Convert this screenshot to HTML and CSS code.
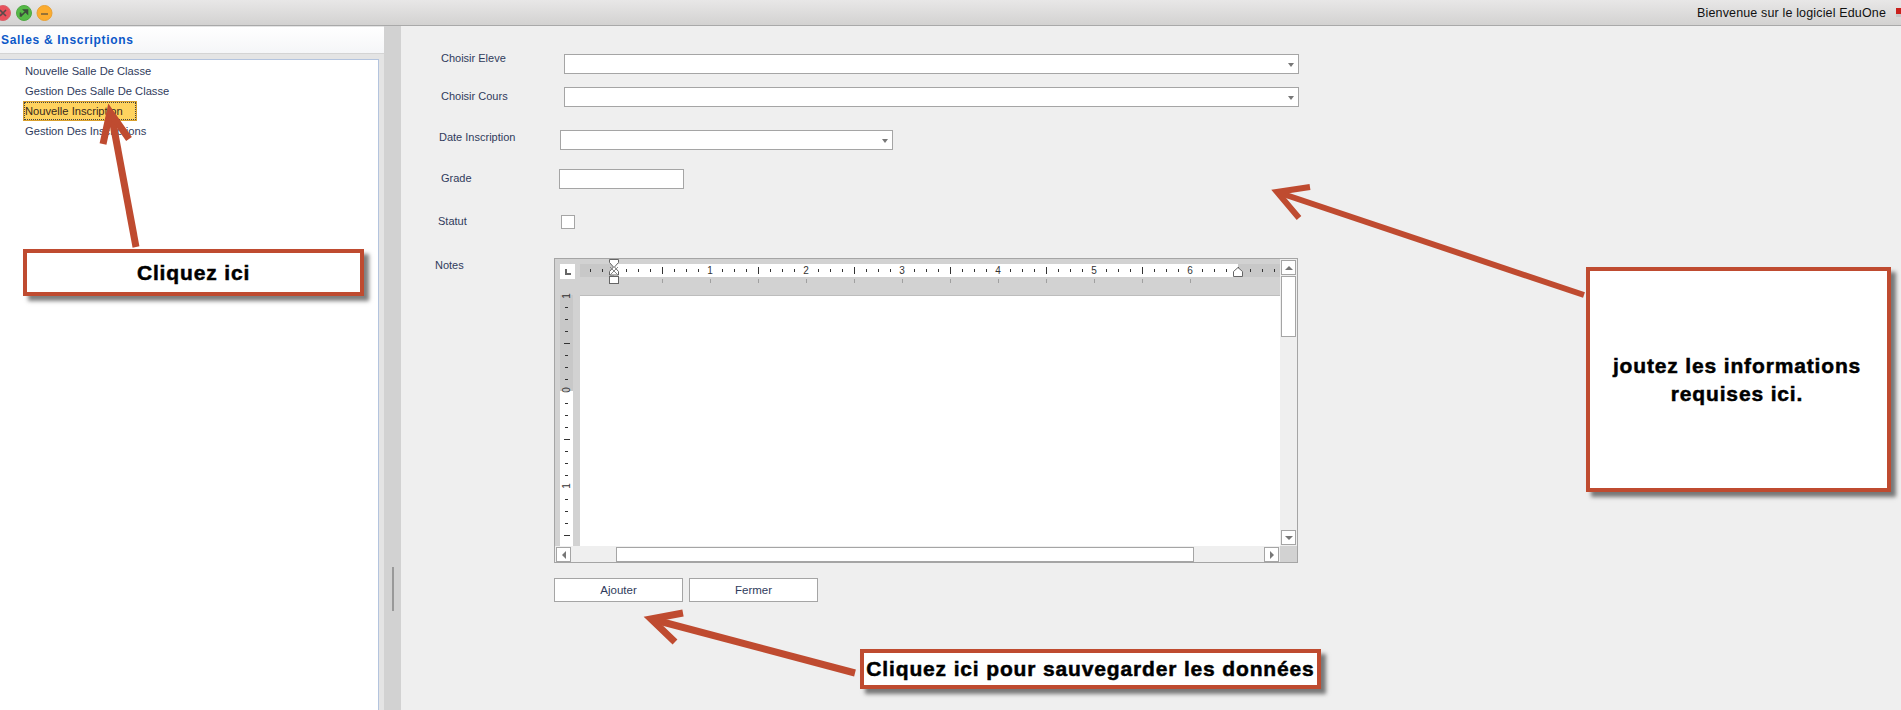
FILE: index.html
```html
<!DOCTYPE html>
<html>
<head>
	<meta charset="utf-8">
	<title>Salles &amp; Inscriptions</title>
	<link rel="stylesheet" href="styles.css">
</head>
<body>
	<div class="titlebar">
		<svg class="lights" width="56" height="22" viewBox="0 0 56 22">
			<circle cx="3" cy="11" r="7.5" fill="#e8515c" stroke="#d8636b"/>
			<path d="M0 8l6 6M6 8l-6 6" stroke="#5a4a4a" stroke-width="1.6"/>
			<circle cx="24" cy="11" r="7.5" fill="#56b947" stroke="#4fa844"/>
			<path d="M21 14l6-6M24 8h3.5v3.5zM21 14h-0.500v-3.500z" stroke="#3c4a3c" stroke-width="1.600" fill="#3c4a3c"/>
			<circle cx="44.500" cy="11" r="7.500" fill="#fcac2e" stroke="#e8a033"/>
			<path d="M41 12h7" stroke="#6a5a3a" stroke-width="1.400"/>
		</svg>
		<span class="welcome">Bienvenue sur le logiciel EduOne</span>
		<span class="tray"></span>
	</div>

	<div class="main">
		<div class="sidebar">
			<div class="side-head">Salles &amp; Inscriptions</div>
			<ul class="menu">
				<li>Nouvelle Salle De Classe</li>
				<li>Gestion Des Salle De Classe</li>
				<li class="selected"><span>Nouvelle Inscription</span></li>
				<li>Gestion Des Inscriptions</li>
			</ul>
		</div>

		<div class="splitter"><span class="grip"></span></div>

		<div class="content">
			<div class="row row-eleve">
				<label>Choisir Eleve</label>
				<div class="field combo wide"></div>
			</div>
			<div class="row row-cours">
				<label>Choisir Cours</label>
				<div class="field combo wide"></div>
			</div>
			<div class="row row-date">
				<label>Date Inscription</label>
				<div class="field combo date"></div>
			</div>
			<div class="row row-grade">
				<label>Grade</label>
				<div class="field grade"></div>
			</div>
			<div class="row row-statut">
				<label>Statut</label>
				<div class="check"></div>
			</div>
			<div class="row row-notes">
				<label>Notes</label>
				<div class="editor">
					<svg class="hruler" width="725" height="36" viewBox="0 0 725 36">
						<defs>
							<pattern id="hticks" width="96" height="36" patternUnits="userSpaceOnUse" patternTransform="translate(59 0)">
								<rect x="12" y="10" width="1" height="3" fill="#333"/>
								<rect x="24" y="10" width="1" height="3" fill="#333"/>
								<rect x="36" y="10" width="1" height="3" fill="#333"/>
								<rect x="48" y="8" width="1" height="7" fill="#333"/>
								<rect x="60" y="10" width="1" height="3" fill="#333"/>
								<rect x="72" y="10" width="1" height="3" fill="#333"/>
								<rect x="84" y="10" width="1" height="3" fill="#333"/>
							</pattern>
							<pattern id="htabs" width="48" height="36" patternUnits="userSpaceOnUse" patternTransform="translate(59 0)">
								<rect x="0" y="20" width="1" height="4" fill="#a0a0a0"/>
							</pattern>
						</defs>
						<rect x="5" y="5" width="15" height="15" fill="#fff"/>
						<path d="M10 10v6h6v-2h-4v-4z" fill="#666"/>
						<rect x="25" y="5" width="700" height="13" fill="#c8c8c8"/>
						<rect x="59" y="5" width="624" height="13" fill="#fff"/>
						<rect x="27" y="0" width="696" height="18" fill="url(#hticks)"/>
						<rect x="100" y="18" width="540" height="8" fill="url(#htabs)"/>
						<g class="ruler-num">
							<text x="155" y="15">1</text>
							<text x="251" y="15">2</text>
							<text x="347" y="15">3</text>
							<text x="443" y="15">4</text>
							<text x="539" y="15">5</text>
							<text x="635" y="15">6</text>
						</g>
						<path d="M54.500 0.500h9v3l-4 4.500 4 4.500v3.500h-9v-3.500l4-4.500-4-4.500z" fill="#fff" stroke="#666"/>
						<path d="M55 8l8 8M63 8l-8 8" stroke="#888"/>
						<rect x="54.500" y="17.500" width="9" height="7" fill="#fff" stroke="#666"/>
						<path d="M678.500 17.500v-5l4.500-4 4.500 4v5z" fill="#fff" stroke="#666"/>
					</svg>
					<div class="vscroll">
						<div class="sb-top">
							<div class="sb-btn"><i class="tri up"></i></div>
							<div class="sb-thumb-v"></div>
						</div>
						<div class="sb-btn"><i class="tri down"></i></div>
					</div>
					<svg class="vruler" width="25" height="251" viewBox="0 0 25 251">
						<defs>
							<pattern id="vticks" width="25" height="96" patternUnits="userSpaceOnUse" patternTransform="translate(0 0)">
								<rect x="10" y="12" width="3" height="1" fill="#333"/>
								<rect x="10" y="24" width="3" height="1" fill="#333"/>
								<rect x="10" y="36" width="3" height="1" fill="#333"/>
								<rect x="9" y="48" width="6" height="1" fill="#333"/>
								<rect x="10" y="60" width="3" height="1" fill="#333"/>
								<rect x="10" y="72" width="3" height="1" fill="#333"/>
								<rect x="10" y="84" width="3" height="1" fill="#333"/>
							</pattern>
						</defs>
						<rect x="5" y="0" width="13" height="96" fill="#c8c8c8"/>
						<rect x="5" y="96" width="13" height="155" fill="#fff"/>
						<rect x="5" y="0" width="13" height="251" fill="url(#vticks)"/>
						<g class="ruler-num">
							<text transform="translate(15 95) rotate(-90)">0</text>
							<text transform="translate(15 191) rotate(-90)">1</text>
							<text transform="translate(15 1) rotate(-90)">1</text>
						</g>
					</svg>
					<div class="page"></div>
					<div class="hscroll">
						<div class="sb-btn"><i class="tri left"></i></div>
						<div class="sb-thumb-h"></div>
						<div class="sb-btn"><i class="tri right"></i></div>
					</div>
				</div>
			</div>
			<div class="buttons">
				<button>Ajouter</button>
				<button>Fermer</button>
			</div>
		</div>
	</div>

	<!-- annotations drawn over the screenshot -->
	<svg class="arrows" width="1901" height="710" viewBox="0 0 1901 710">
		<g fill="none" stroke="#bf4b30" stroke-width="7">
			<path d="M136 247L112 118"/>
			<path d="M103 144L110 112L129 139"/>
			<path d="M1584 295L1280 193" stroke-width="6"/>
			<path d="M1310 187L1277 192L1299 218" stroke-width="6"/>
			<path d="M855 673L655 620"/>
			<path d="M683 613L651 619L675 642"/>
		</g>
	</svg>
	<div class="note note-menu">Cliquez ici</div>
	<div class="note note-info">joutez les informations<br>requises ici.</div>
	<div class="note note-save">Cliquez ici pour sauvegarder les données</div>
</body>
</html>
```

FILE: styles.css
```css
html, body {
  margin: 0;
  height: 710px;
  overflow: hidden;
}
body {
  position: relative;
  display: flex;
  flex-direction: column;
  background-color: #efefef;
  font-family: "Liberation Sans", Arial, sans-serif;
  font-size: 11.200px;
  color: #2f3b5c;
}

/* title bar */
.titlebar {
  display: flex;
  align-items: center;
  height: 25px;
  flex: none;
  background: linear-gradient(#e8e7e7, #d3d2d1);
  border-bottom: 1px solid #a9a9a9;
}
.lights {
  flex: none;
}
.welcome {
  margin-left: auto;
  margin-right: 10px;
  color: #111;
  font-size: 12.500px;
  letter-spacing: 0.150px;
}
.tray {
  width: 5px;
  height: 9px;
  flex: none;
  margin-bottom: 1px;
  background: linear-gradient(#c9201c 0 6px, #c8c8c8 6px);
}

.main {
  display: flex;
  flex: 1;
  min-height: 0;
}

/* left panel */
.sidebar {
  display: flex;
  flex-direction: column;
  width: 384px;
  flex: none;
  background-color: #e4e4e4;
}
.side-head {
  height: 26px;
  line-height: 27px;
  margin-top: 1px;
  padding-left: 1px;
  background: linear-gradient(#ffffff, #f5f6f8);
  border-bottom: 1px solid #d4d4d4;
  color: #0a58c8;
  font-size: 12px;
  font-weight: bold;
  letter-spacing: 0.700px;
}
.menu {
  flex: 1;
  list-style: none;
  margin: 5px 5px 0 0;
  padding: 1px 0 0 23px;
  background-color: #fff;
  border-top: 1px solid #b4c4de;
  border-right: 1px solid #b4c4de;
}
.menu li {
  height: 20px;
  line-height: 20px;
  padding-left: 2px;
}
.menu .selected {
  padding-left: 0;
}
.selected span {
  display: inline-block;
  width: 114px;
  height: 20px;
  line-height: 18px;
  padding-left: 1px;
  box-sizing: border-box;
  color: #3a2a1a;
  background-color: #ffd35f;
  border: 1px solid #d9a02e;
  outline: 1px dotted #444;
  outline-offset: -2px;
}

/* splitter */
.splitter {
  display: flex;
  width: 17px;
  flex: none;
  background-color: #d2d2d2;
}
.grip {
  width: 2px;
  height: 44px;
  margin: 541px 0 0 8px;
  background-color: #999;
}

/* form */
.content {
  flex: 1;
  padding-top: 28px;
}
.row {
  display: flex;
  align-items: flex-start;
}
.row label {
  flex: none;
  line-height: 14px;
  font-size: 11px;
}
.row-eleve { padding-left: 40px; }
.row-eleve label { width: 123px; margin-top: -3px; }
.row-cours { padding-left: 40px; margin-top: 13px; }
.row-cours label { width: 123px; margin-top: 2px; }
.row-date { padding-left: 38px; margin-top: 23px; }
.row-date label { width: 121px; }
.row-grade { padding-left: 40px; margin-top: 19px; }
.row-grade label { width: 118px; margin-top: 2px; }
.row-statut { padding-left: 37px; margin-top: 26px; }
.row-statut label { width: 123px; margin-top: -1px; }
.row-notes { padding-left: 34px; margin-top: 29px; }
.row-notes label { width: 119px; }

.field {
  position: relative;
  height: 20px;
  box-sizing: border-box;
  background-color: #fff;
  border: 1px solid #a5a5a5;
}
.wide { width: 735px; }
.date { width: 333px; }
.grade { width: 125px; }
.combo::after {
  content: "";
  position: absolute;
  right: 4px;
  top: 8px;
  border-top: 4px solid #777;
  border-left: 3px solid transparent;
  border-right: 3px solid transparent;
}
.check {
  width: 14px;
  height: 14px;
  box-sizing: border-box;
  background-color: #fff;
  border: 1px solid #a5a5a5;
}

/* notes editor */
.editor {
  display: grid;
  grid-template-columns: 25px 700px 17px;
  grid-template-rows: 36px 251px 16px;
  flex: none;
  background-color: #d2d2d2;
  border: 1px solid #a5a5a5;
}
.hruler {
  grid-column: 1 / 3;
}
.vruler {
  display: block;
  overflow: visible;
}
.ruler-num text {
  font-family: "Liberation Sans", sans-serif;
  font-size: 10px;
  fill: #333;
  text-anchor: middle;
}
.page {
  background-color: #fff;
  border-top: 1px solid #bdbdbd;
  box-sizing: border-box;
}
.vscroll {
  grid-row: 1 / 3;
  grid-column: 3;
  display: flex;
  flex-direction: column;
  justify-content: space-between;
  padding: 1px;
  background-color: #efefef;
}
.hscroll {
  grid-column: 1 / 3;
  display: flex;
  padding: 1px 1px 0 1px;
  background-color: #efefef;
}
.sb-btn {
  display: flex;
  align-items: center;
  justify-content: center;
  width: 15px;
  height: 15px;
  box-sizing: border-box;
  background-color: #fff;
  border: 1px solid #a5a5a5;
}
.sb-thumb-v {
  width: 15px;
  height: 61px;
  margin-top: 1px;
  box-sizing: border-box;
  background-color: #fff;
  border: 1px solid #a5a5a5;
}
.sb-thumb-h {
  width: 578px;
  height: 15px;
  margin-left: 45px;
  box-sizing: border-box;
  background-color: #fff;
  border: 1px solid #a5a5a5;
}
.hscroll .sb-btn:last-child {
  margin-left: auto;
}
.tri {
  width: 0;
  height: 0;
}
.tri.up { border-bottom: 4px solid #777; border-left: 4px solid transparent; border-right: 4px solid transparent; }
.tri.down { border-top: 4px solid #777; border-left: 4px solid transparent; border-right: 4px solid transparent; }
.tri.left { border-right: 4px solid #777; border-top: 4px solid transparent; border-bottom: 4px solid transparent; }
.tri.right { border-left: 4px solid #777; border-top: 4px solid transparent; border-bottom: 4px solid transparent; }

.buttons {
  display: flex;
  gap: 6px;
  margin: 15px 0 0 153px;
}
.buttons button {
  width: 129px;
  height: 24px;
  padding: 0;
  background-color: #fff;
  border: 1px solid #a5a5a5;
  color: #2f3b5c;
  font-family: "Liberation Sans", sans-serif;
  font-size: 11.500px;
}

/* annotations */
.arrows {
  position: absolute;
  left: 0;
  top: 0;
  pointer-events: none;
}
.note {
  position: absolute;
  box-sizing: border-box;
  display: flex;
  align-items: center;
  justify-content: center;
  text-align: center;
  background-color: #fff;
  border: 4px solid #bf4b30;
  box-shadow: 5px 5px 4px rgba(0, 0, 0, 0.5);
  color: #000;
  font-weight: bold;
  font-size: 21px;
  letter-spacing: 0.850px;
  -webkit-text-stroke: 0.500px #000;
}
.note-menu {
  left: 23px;
  top: 249px;
  width: 341px;
  height: 47px;
}
.note-info {
  left: 1586px;
  top: 267px;
  width: 305px;
  height: 225px;
  padding-right: 3px;
  line-height: 28px;
}
.note-save {
  left: 860px;
  top: 649px;
  width: 461px;
  height: 40px;
}
```
